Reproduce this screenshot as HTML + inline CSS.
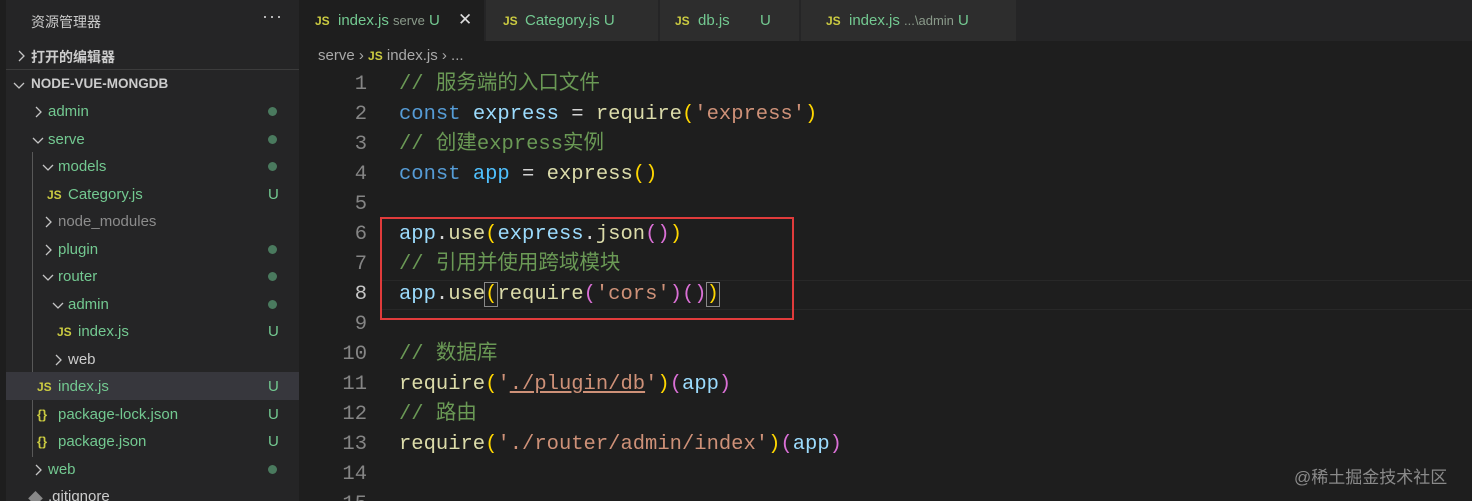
<!DOCTYPE html>
<html><head><meta charset="utf-8"><style>
*{margin:0;padding:0;box-sizing:border-box}
html,body{width:1472px;height:501px;overflow:hidden}
body{background:#1e1e1e;font-family:"Liberation Sans","Noto Sans CJK SC",sans-serif;position:relative}
#side{position:absolute;left:0;top:0;width:299px;height:501px;background:#252526;border-left:6px solid #1e1e1e}
.t{position:absolute;white-space:nowrap;font-size:15px}
.row{position:absolute;left:0;width:293px;height:27px;font-size:15px;color:#73c991;white-space:nowrap}
.row span{position:absolute;top:6px}
.row svg{position:absolute;top:8px}
.dot{position:absolute;left:262px;top:10px;width:9px;height:9px;border-radius:50%;background:#4a7a5e}
.row .u{position:absolute;left:262px;top:6px;color:#73c991}
.js{font-weight:bold;color:#cbcb41;font-size:12px;font-family:"Liberation Sans",sans-serif}
#tabs{position:absolute;left:299px;top:0;width:1173px;height:41px;background:#252526}
.tab{position:absolute;top:0;height:41px;background:#2d2d2d;border-right:1px solid #252526;font-size:15px;color:#73c991;white-space:nowrap}
.tab span{position:absolute;top:12px}
#code{position:absolute;left:299px;top:70px;font-family:"Liberation Mono","Noto Sans CJK SC",monospace;font-size:20.5px}
.ln,.cl{position:absolute;height:30px;line-height:30px;overflow:visible}
.ln{width:68px;text-align:right;color:#858585}
.cl{left:100px;white-space:pre;color:#d4d4d4}
.c{color:#6a9955}.k{color:#569cd6}.v{color:#9cdcfe}.f{color:#dcdcaa}.s{color:#ce9178}.y{color:#ffd700}.p{color:#da70d6}.b{color:#4fc1ff}
</style></head><body>
<svg width="0" height="0" style="position:absolute"><defs>
<symbol id="r" viewBox="0 0 14 14"><polyline points="5,2 10,7 5,12" fill="none" stroke="#c5c5c5" stroke-width="1.3"/></symbol>
<symbol id="d" viewBox="0 0 14 14"><polyline points="2,5 7,10 12,5" fill="none" stroke="#c5c5c5" stroke-width="1.3"/></symbol>
</defs></svg>
<div id="side">
<div class="t" style="left:25px;top:12px;color:#ccc;font-size:14px">资源管理器</div>
<div class="t" style="left:256px;top:6px;color:#ccc;font-size:18px;letter-spacing:1px">···</div>
<svg width="14" height="14" style="position:absolute;left:8px;top:49px"><use href="#r"/></svg>
<div class="t" style="left:25px;top:47px;color:#ccc;font-weight:bold;font-size:14px">打开的编辑器</div>
<div style="position:absolute;left:0;top:69px;width:293px;height:1px;background:#3c3c3c"></div>
<svg width="14" height="14" style="position:absolute;left:6px;top:78px"><use href="#d"/></svg>
<div class="t" style="left:25px;top:76px;color:#ccc;font-weight:bold;font-size:13.5px">NODE-VUE-MONGDB</div>
<div style="position:absolute;left:26px;top:152px;width:1px;height:305px;background:#585858"></div>
<div class="row" style="top:97px"><svg width="14" height="14" style="left:25px"><use href="#r"/></svg><span style="left:42px">admin</span><i class="dot"></i></div>
<div class="row" style="top:125px"><svg width="14" height="14" style="left:25px"><use href="#d"/></svg><span style="left:42px">serve</span><i class="dot"></i></div>
<div class="row" style="top:152px"><svg width="14" height="14" style="left:35px"><use href="#d"/></svg><span style="left:52px">models</span><i class="dot"></i></div>
<div class="row" style="top:180px"><span class="js" style="left:41px;top:8px">JS</span><span style="left:62px">Category.js</span><span class="u">U</span></div>
<div class="row" style="top:207px;color:#8c8c8c"><svg width="14" height="14" style="left:35px"><use href="#r"/></svg><span style="left:52px">node_modules</span></div>
<div class="row" style="top:235px"><svg width="14" height="14" style="left:35px"><use href="#r"/></svg><span style="left:52px">plugin</span><i class="dot"></i></div>
<div class="row" style="top:262px"><svg width="14" height="14" style="left:35px"><use href="#d"/></svg><span style="left:52px">router</span><i class="dot"></i></div>
<div class="row" style="top:290px"><svg width="14" height="14" style="left:45px"><use href="#d"/></svg><span style="left:62px">admin</span><i class="dot"></i></div>
<div class="row" style="top:317px"><span class="js" style="left:51px;top:8px">JS</span><span style="left:72px">index.js</span><span class="u">U</span></div>
<div class="row" style="top:345px;color:#ccc"><svg width="14" height="14" style="left:45px"><use href="#r"/></svg><span style="left:62px">web</span></div>
<div class="row" style="top:372px;background:#37373d;height:28px"><span class="js" style="left:31px;top:8px">JS</span><span style="left:52px">index.js</span><span class="u">U</span></div>
<div class="row" style="top:400px"><span style="left:31px;color:#cbcb41;font-weight:bold;font-size:13px;top:7px">{}</span><span style="left:52px">package-lock.json</span><span class="u">U</span></div>
<div class="row" style="top:427px"><span style="left:31px;color:#cbcb41;font-weight:bold;font-size:13px;top:7px">{}</span><span style="left:52px">package.json</span><span class="u">U</span></div>
<div class="row" style="top:455px"><svg width="14" height="14" style="left:25px"><use href="#r"/></svg><span style="left:42px">web</span><i class="dot"></i></div>
<div class="row" style="top:482px;color:#ccc"><span style="left:22px;color:#888">◆</span><span style="left:42px">.gitignore</span></div>
</div>
<div id="tabs">
<div class="tab" style="left:0;width:186px;background:#1e1e1e"><span class="js" style="left:16px;top:14px">JS</span><span style="left:39px">index.js <small style="color:#8a9a8a;font-size:13px">serve</small> U</span><span style="left:159px;color:#ddd;top:10px;font-size:17px">✕</span></div>
<div class="tab" style="left:187px;width:173px"><span class="js" style="left:17px;top:14px">JS</span><span style="left:39px">Category.js U</span></div>
<div class="tab" style="left:361px;width:140px"><span class="js" style="left:15px;top:14px">JS</span><span style="left:38px">db.js</span><span style="left:100px">U</span></div>
<div class="tab" style="left:502px;width:216px"><span class="js" style="left:25px;top:14px">JS</span><span style="left:48px">index.js <small style="color:#8a9a8a;font-size:13px">...\admin</small> U</span></div>
</div>
<div class="t" style="left:318px;top:47px;color:#a9a9a9;font-size:15px">serve › <span class="js">JS</span> index.js › ...</div>
<div style="position:absolute;left:380px;top:280px;width:1092px;height:30px;border-top:1px solid #282828;border-bottom:1px solid #282828"></div>
<div id="code">
<div class="ln" style="top:0px">1</div><div class="cl c" style="top:0px">// 服务端的入口文件</div>
<div class="ln" style="top:30px">2</div><div class="cl" style="top:30px"><span class="k">const</span> <span class="v">express</span> = <span class="f">require</span><span class="y">(</span><span class="s">'express'</span><span class="y">)</span></div>
<div class="ln" style="top:60px">3</div><div class="cl c" style="top:60px">// 创建express实例</div>
<div class="ln" style="top:90px">4</div><div class="cl" style="top:90px"><span class="k">const</span> <span class="b">app</span> = <span class="f">express</span><span class="y">()</span></div>
<div class="ln" style="top:120px">5</div>
<div class="ln" style="top:150px">6</div><div class="cl" style="top:150px"><span class="v">app</span>.<span class="f">use</span><span class="y">(</span><span class="v">express</span>.<span class="f">json</span><span class="p">()</span><span class="y">)</span></div>
<div class="ln" style="top:180px">7</div><div class="cl c" style="top:180px">// 引用并使用跨域模块</div>
<div class="ln" style="top:210px;color:#c6c6c6">8</div><div class="cl" style="top:210px"><span class="v">app</span>.<span class="f">use</span><span class="y" style="outline:1px solid #888">(</span><span class="f">require</span><span class="p">(</span><span class="s">'cors'</span><span class="p">)</span><span class="p">()</span><span class="y" style="outline:1px solid #888">)</span></div>
<div class="ln" style="top:240px">9</div>
<div class="ln" style="top:270px">10</div><div class="cl c" style="top:270px">// 数据库</div>
<div class="ln" style="top:300px">11</div><div class="cl" style="top:300px"><span class="f">require</span><span class="y">(</span><span class="s">'<u>./plugin/db</u>'</span><span class="y">)</span><span class="p">(</span><span class="v">app</span><span class="p">)</span></div>
<div class="ln" style="top:330px">12</div><div class="cl c" style="top:330px">// 路由</div>
<div class="ln" style="top:360px">13</div><div class="cl" style="top:360px"><span class="f">require</span><span class="y">(</span><span class="s">'./router/admin/index'</span><span class="y">)</span><span class="p">(</span><span class="v">app</span><span class="p">)</span></div>
<div class="ln" style="top:390px">14</div>
<div class="ln" style="top:420px">15</div>
</div>
<div style="position:absolute;left:380px;top:217px;width:414px;height:103px;border:2px solid #e03b3b"></div>
<div class="t" style="left:1294px;top:463px;color:#8a8a8a;font-size:17px">@稀土掘金技术社区</div>
</body></html>
